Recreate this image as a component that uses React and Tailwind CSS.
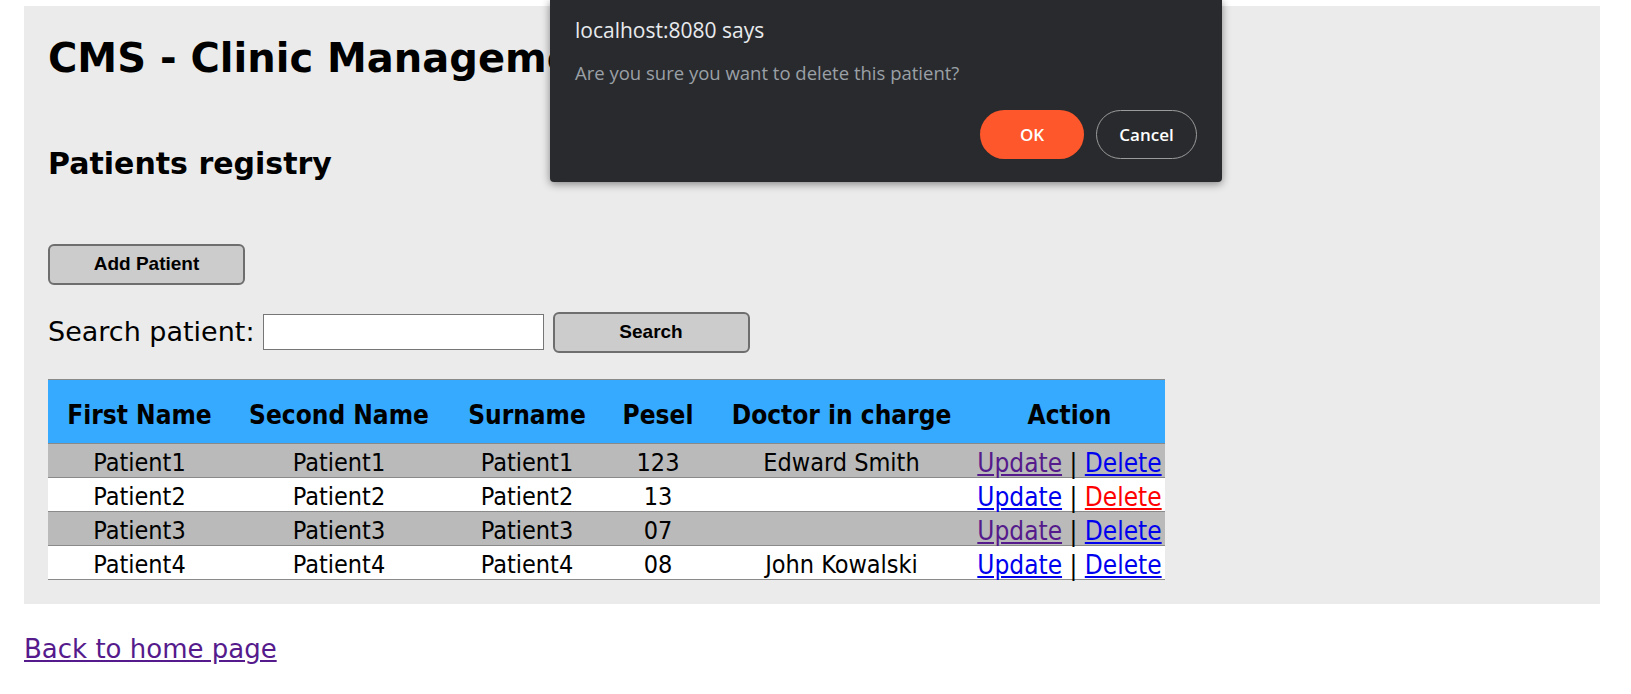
const patients = [
  { first: 'Patient1', second: 'Patient1', surname: 'Patient1', pesel: '123', doctor: 'Edward Smith', shade: true, updateVisited: true, deleteActive: false },
  { first: 'Patient2', second: 'Patient2', surname: 'Patient2', pesel: '13', doctor: '', shade: false, updateVisited: false, deleteActive: true },
  { first: 'Patient3', second: 'Patient3', surname: 'Patient3', pesel: '07', doctor: '', shade: true, updateVisited: true, deleteActive: false },
  { first: 'Patient4', second: 'Patient4', surname: 'Patient4', pesel: '08', doctor: 'John Kowalski', shade: false, updateVisited: false, deleteActive: false },
];

const headers = ['First Name', 'Second Name', 'Surname', 'Pesel', 'Doctor in charge', 'Action'];
const colWidths = ['w-[183px]', 'w-[216px]', 'w-[160px]', 'w-[102px]', 'w-[265px]', 'w-[191px]'];

const GreyButton = ({ children }) => (
  <button className="h-[41px] w-[197px] rounded-[6px] border-2 border-[#6e6e6e] bg-[#cccccc] font-['Liberation_Sans',Arial,sans-serif] text-[19px] font-bold text-black">
    {children}
  </button>
);

const ConfirmDialog = () => (
  <div className="absolute left-[550px] top-0 flex h-[182px] w-[672px] flex-col rounded-b-[4px] bg-[#292a2d] px-[25px] pt-[16px] font-['Open_Sans',sans-serif] shadow-[0_2px_8px_rgba(0,0,0,0.45)]">
    <div className="text-[21px] leading-[28px] text-[#e8eaed]">localhost:8080 says</div>
    <div className="mt-[17px] text-[18.5px] leading-[24px] text-[#9aa0a6]">Are you sure you want to delete this patient?</div>
    <div className="mt-[25px] flex justify-end gap-[12px]">
      <button className="h-[49px] w-[104px] rounded-full bg-[#fe572b] text-[17px] font-semibold text-white">OK</button>
      <button className="h-[49px] w-[101px] rounded-full border border-[#9b9b9b] text-[17px] font-semibold text-white">Cancel</button>
    </div>
  </div>
);

export default function App() {
  return (
    <div className="relative min-h-[694px] bg-white pt-[6px] font-['DejaVu_Sans',Verdana,sans-serif] text-black">
      <div className="ml-[24px] mr-[31px] bg-[#ebebeb] pb-[24px] pl-[24px] pt-[28px]">
        <h1 className="text-[40px] font-bold leading-[48px]">CMS - Clinic Management System</h1>
        <h2 className="mt-[64px] text-[30px] font-bold leading-[36px]">Patients registry</h2>

        <div className="mt-[62px]">
          <GreyButton>Add Patient</GreyButton>
        </div>

        <div className="mt-[26px] flex h-[42px] items-center">
          <span className="text-[27px] leading-[30px]">Search patient:</span>
          <input type="text" className="ml-[8px] h-[36px] w-[281px] border border-[#767676] bg-white" />
          <div className="ml-[9px]">
            <GreyButton>Search</GreyButton>
          </div>
        </div>

        <table className="mt-[26px] w-[1117px] table-fixed border-collapse font-['DejaVu_Sans_Condensed','DejaVu_Sans',sans-serif] text-[25px]">
          <colgroup>
            {colWidths.map((w, i) => (
              <col key={i} className={w} />
            ))}
          </colgroup>
          <thead>
            <tr className="h-[64px] border-y border-[#8a8a8a] bg-[#36aaff]">
              {headers.map((h) => (
                <th key={h} className="px-0 pb-0 pt-[6px] text-center text-[26px] font-bold leading-[30px]">{h}</th>
              ))}
            </tr>
          </thead>
          <tbody>
            {patients.map((p) => (
              <tr key={p.first} className={`h-[34px] border-b border-[#8a8a8a] ${p.shade ? 'bg-[#bababa]' : 'bg-white'}`}>
                <td className="px-0 pb-0 pt-[5px] text-center leading-[28px]">{p.first}</td>
                <td className="px-0 pb-0 pt-[5px] text-center leading-[28px]">{p.second}</td>
                <td className="px-0 pb-0 pt-[5px] text-center leading-[28px]">{p.surname}</td>
                <td className="px-0 pb-0 pt-[5px] text-center leading-[28px]">{p.pesel}</td>
                <td className="px-0 pb-0 pt-[5px] text-center leading-[28px]">{p.doctor}</td>
                <td className="whitespace-nowrap px-0 pb-0 pt-[5px] text-center text-[26px] leading-[28px]">
                  <a href="#" className={`underline ${p.updateVisited ? 'text-[#551a8b]' : 'text-[#0000ee]'}`}>Update</a>
                  {' | '}
                  <a href="#" className={`underline ${p.deleteActive ? 'text-[#ff0000]' : 'text-[#0000ee]'}`}>Delete</a>
                </td>
              </tr>
            ))}
          </tbody>
        </table>
      </div>

      <div className="ml-[24px] mt-[30px]">
        <a href="#" className="text-[26px] leading-[30px] text-[#551a8b] underline">Back to home page</a>
      </div>

      <ConfirmDialog />
    </div>
  );
}
